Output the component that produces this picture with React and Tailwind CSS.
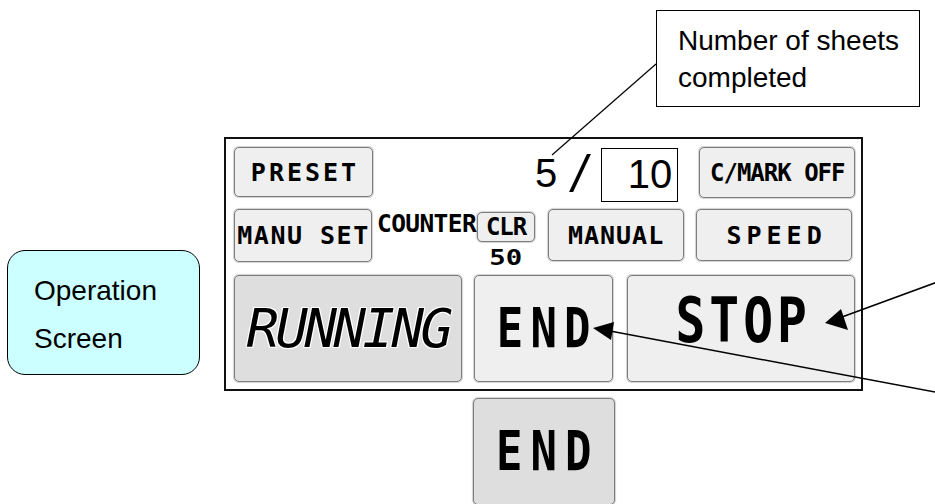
import clsx from "clsx";

const Btn = ({ className, children }) => (
  <div
    className={clsx(
      "flex shrink-0 items-center justify-center rounded-[5px] border border-[#7d7d7d] shadow-[0_0_1px_1px_rgba(0,0,0,0.18)] font-['DejaVu_Sans_Mono',monospace] font-bold leading-none text-black",
      className
    )}
  >
    {children}
  </div>
);

export default function App() {
  return (
    <div className="relative h-[504px] w-[935px] overflow-hidden bg-white font-['Liberation_Sans',Arial,sans-serif] text-black">
      {/* callout */}
      <div className="absolute left-[656px] top-[10px] h-[97px] w-[264px] border border-black bg-white pl-[21px] pt-[11px] text-[28px] leading-[37px]">
        <div>Number of sheets</div>
        <div>completed</div>
      </div>

      {/* screen label */}
      <div className="absolute left-[7px] top-[250px] h-[125px] w-[193px] rounded-[18px] border border-black bg-[#ccffff] pl-[26px] pt-[16px] text-[28px] leading-[48px]">
        <div>Operation</div>
        <div>Screen</div>
      </div>

      {/* operation panel */}
      <div className="absolute left-[224px] top-[137px] h-[254px] w-[639px] border-2 border-[#111] bg-white pl-[8px] pt-[8px]">
        <div className="flex h-[51px] items-start">
          <Btn className="h-[50px] w-[139px] bg-[#efefef] pl-[3px] text-[25px] tracking-[3px]">PRESET</Btn>
          <div className="ml-[162px] flex items-start">
            <span className="mt-[6px] text-[40px] leading-none">5</span>
            <span className="mt-[1px] w-[44px] text-center text-[52px] italic leading-none">/</span>
            <div className="mt-[1px] flex h-[54px] w-[77px] items-center justify-end border border-black pb-[2px] pr-[5px] text-[40px] leading-none">
              10
            </div>
          </div>
          <Btn className="ml-[21px] h-[51px] w-[156px] bg-[#efefef] text-[24px] tracking-[-1px]">C/MARK OFF</Btn>
        </div>

        <div className="mt-[11px] flex h-[53px] items-start">
          <Btn className="h-[53px] w-[138px] bg-[#efefef] pl-[1px] text-[25px] tracking-[1.5px]">MANU SET</Btn>
          <div className="ml-[5px] flex items-start">
            <span className="mt-[3px] font-['DejaVu_Sans_Mono',monospace] text-[24.5px] font-bold leading-none tracking-[-0.6px]">
              COUNTER
            </span>
            <div className="ml-[1px] flex flex-col items-center">
              <Btn className="mt-[3px] h-[30px] w-[58px] bg-[#efefef] text-[24px] tracking-[-1px]">CLR</Btn>
              <span className="mt-[6px] inline-block scale-x-[1.3] font-['DejaVu_Sans_Mono',monospace] text-[21px] font-bold leading-none">
                50
              </span>
            </div>
          </div>
          <Btn className="ml-[13px] h-[52px] w-[136px] bg-[#efefef] text-[25px] tracking-[1px]">MANUAL</Btn>
          <Btn className="ml-[12px] h-[52px] w-[156px] bg-[#efefef] pl-[5px] text-[25px] tracking-[5px]">SPEED</Btn>
        </div>

        <div className="mt-[13px] flex h-[107px] items-start">
          <Btn className="h-[107px] w-[228px] bg-[#dedede] text-[54px] font-normal italic tracking-[-3.5px] [text-shadow:1px_1px_0_#fff,-1px_-1px_0_#fff,1px_-1px_0_#fff,-1px_1px_0_#fff]">
            RUNNING
          </Btn>
          <Btn className="ml-[12px] h-[107px] w-[139px] bg-[#efefef] text-[55px]">
            <span className="inline-block scale-x-[0.8] pl-[9px] tracking-[9px]">END</span>
          </Btn>
          <Btn className="ml-[14px] h-[107px] w-[228px] bg-[#efefef] pb-[15px] text-[62px]">
            <span className="inline-block scale-x-[0.8] pl-[5px] tracking-[5px]">STOP</span>
          </Btn>
        </div>
      </div>

      {/* END button shown below */}
      <Btn className="absolute left-[473px] top-[398px] h-[107px] w-[142px] bg-[#dedede] text-[55px]">
        <span className="inline-block scale-x-[0.8] pl-[10px] tracking-[10px]">END</span>
      </Btn>

      {/* leader lines and arrows */}
      <svg className="pointer-events-none absolute inset-0" width="935" height="504" viewBox="0 0 935 504">
        <line x1="552" y1="155" x2="656" y2="64" stroke="#000" strokeWidth="1.2" />
        <line x1="940" y1="281" x2="842" y2="317" stroke="#000" strokeWidth="1.5" />
        <polygon points="825,323 841,309 848,330" fill="#000" />
        <line x1="940" y1="393" x2="610" y2="331" stroke="#000" strokeWidth="1.5" />
        <polygon points="593,328 614,322 611,340" fill="#000" />
      </svg>
    </div>
  );
}
